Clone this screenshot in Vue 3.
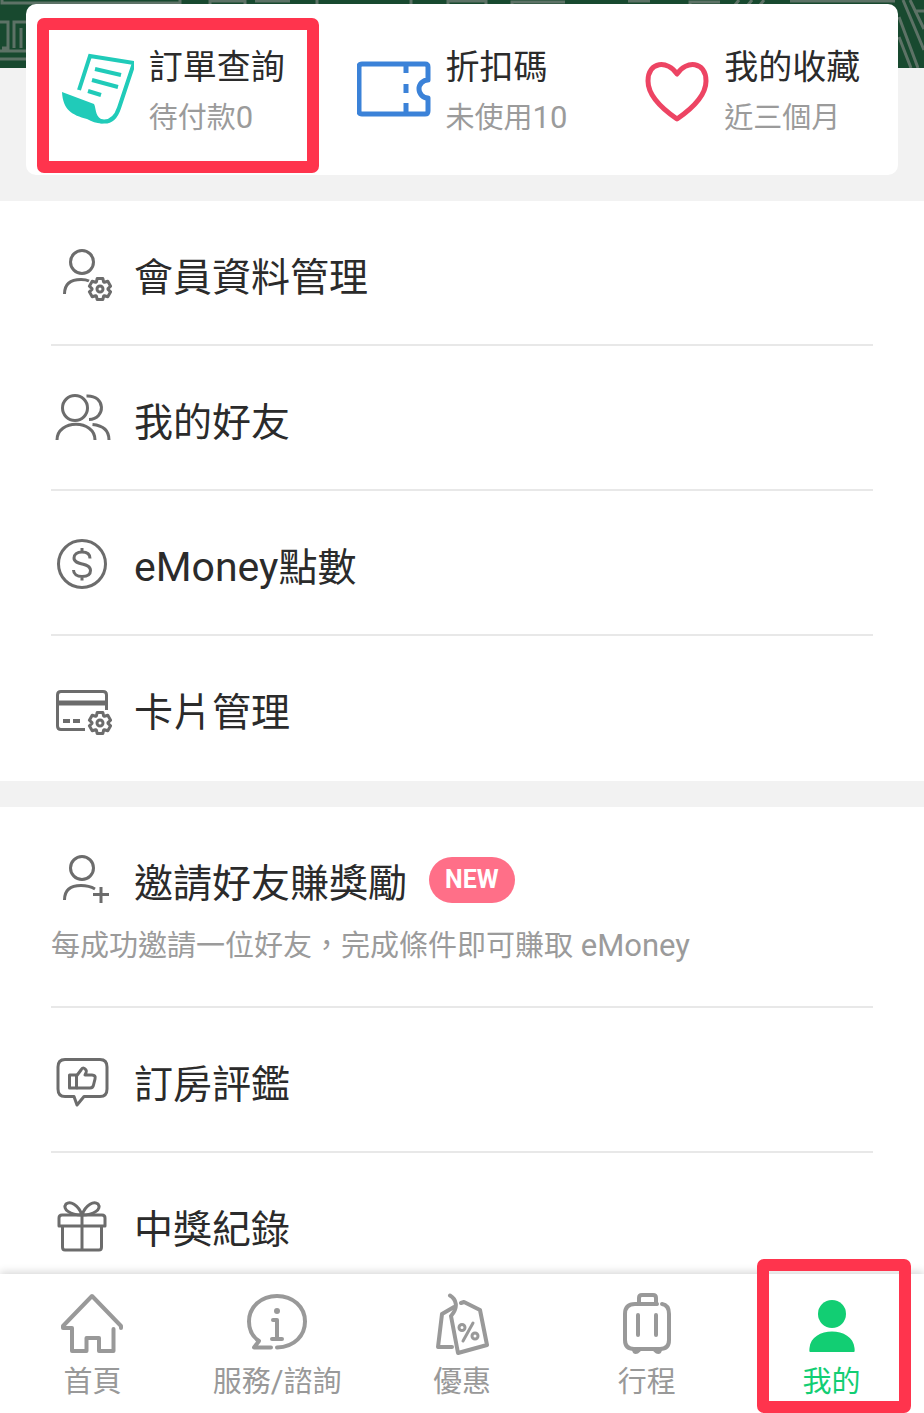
<template>
    <div class="page">
        <main class="content">
            <header class="top">
                <svg class="art" viewBox="0 0 924 68" preserveAspectRatio="none" aria-hidden="true">
                    <rect width="924" height="68" fill="#18492f" />
                    <g fill="none" stroke="#5d7266" stroke-width="3">
                        <path d="M2 0V3H180V0M210 5V1H245V5M255 1H290M317 0V5M411 5V0M448 5V1H486V5M512 5V2H565M628 1H650M690 5V2H720M735 5L739 0M748 5L752 0M760 5L764 0M790 1H895" />
                        <path d="M0 22H8V48H2M14 48V22H26M21 48V28M0 51H26M0 59H26" />
                        <path d="M899 17L918 68M899 37L911 68M903 0L924 50M910 0L924 29M914 11H924" />
                    </g>
                </svg>
                <nav class="card">
                    <a v-for="item in shortcuts" :key="item.title" class="shortcut" :class="{ marked: item.marked }" href="#">
                        <svg v-if="item.icon === 'order'" class="shortcut-icon" viewBox="-2 0 74 74" aria-hidden="true">
                            <path d="M17 38L28 4L72 11L57 56C53 68 46 71 38 69" fill="none" stroke="#20cbb9" stroke-width="4" />
                            <path d="M0 40L32 52C34 55 33 64 39 67L45 70C40 73 32 71 25 67C10 63 1 58 0 40Z" fill="#20cbb9" />
                            <path d="M33 17L59 23M30 28L56 35M26 39L39 43" fill="none" stroke="#20cbb9" stroke-width="4" />
                        </svg>
                        <svg v-else-if="item.icon === 'coupon'" class="shortcut-icon" viewBox="0 0 74 74" aria-hidden="true">
                            <g fill="none" stroke="#3b82d8" stroke-width="5">
                                <path d="M5 12H68Q71 12 71 15V28A9 9 0 0 0 71 46V59Q71 62 68 62H5Q2 62 2 59V15Q2 12 5 12Z" stroke-linejoin="round" />
                                <path d="M49 12V21M49 32V41M49 51V62" />
                            </g>
                        </svg>
                        <svg v-else class="shortcut-icon heart" viewBox="0 0 64 74" aria-hidden="true">
                            <path d="M32 22C23 8 3 9 3 29C3 43 16 56 32 67C48 56 61 43 61 29C61 9 41 8 32 22Z" fill="none" stroke="#ed4463" stroke-width="5" stroke-linejoin="round" />
                        </svg>
                        <span class="shortcut-text">
                            <span class="shortcut-title">{{ item.title }}</span>
                            <span class="shortcut-sub"><span v-for="(part, p) in split(item.sub)" :key="p" :class="{ latin: p % 2 }">{{ part }}</span></span>
                        </span>
                    </a>
                </nav>
            </header>

            <ul v-for="(group, i) in groups" :key="i" class="group">
                <li v-for="row in group" :key="row.title">
                    <a class="row" href="#">
                        <span class="row-head">
                            <svg class="row-icon" viewBox="0 0 60 60" aria-hidden="true">
                                <path v-for="d in icons[row.icon]" :key="d" :d="d" />
                                <path v-if="row.icon === 'card'" class="bar" d="M5 24H55" />
                                <path v-if="row.icon === 'card'" class="dash" d="M11 42H18M21 42H28" />
                            </svg>
                            <span class="row-title"><span v-for="(part, p) in split(row.title)" :key="p" :class="{ latin: p % 2 }">{{ part }}</span></span>
                            <span v-if="row.badge" class="badge">{{ row.badge }}</span>
                        </span>
                        <span v-if="row.note" class="note"><span v-for="(part, p) in split(row.note)" :key="p" :class="{ latin: p % 2 }">{{ part }}</span></span>
                    </a>
                </li>
            </ul>
        </main>

        <nav class="tabbar">
            <a v-for="tab in tabs" :key="tab.label" class="tab" :class="{ active: tab.active }" href="#">
                <svg class="tab-icon" viewBox="0 0 64 64" aria-hidden="true">
                    <path v-for="(d, n) in icons[tab.icon]" :key="d" :d="d" :class="{ thin: tab.icon === 'offer' && n > 1 }" />
                    <circle v-if="tab.icon === 'info'" class="dot" cx="32" cy="18" r="3" />
                </svg>
                <span class="tab-label"><span v-for="(part, p) in split(tab.label)" :key="p" :class="{ latin: p % 2 }">{{ part }}</span></span>
            </a>
        </nav>
    </div>
</template>

<script setup>
// odd parts are latin letters or digits, even parts are Chinese
function split(text) {
    return text.split(/([A-Za-z0-9/ ]+)/)
}

// six-toothed cog, without the hole
function gear(cx, cy) {
    const points = []
    const steps = [[-27, 8], [-15, 11], [15, 11], [27, 8]]
    for (let i = 0; i < 6; i++) {
        for (const [offset, r] of steps) {
            const a = ((i * 60 - 90 + offset) * Math.PI) / 180
            points.push(`${(cx + r * Math.cos(a)).toFixed(1)} ${(cy + r * Math.sin(a)).toFixed(1)}`)
        }
    }
    return `M${points.join('L')}Z`
}

function circle(cx, cy, r) {
    return `M${cx - r} ${cy}a${r} ${r} 0 1 0 ${r * 2} 0a${r} ${r} 0 1 0 ${-r * 2} 0Z`
}

const icons = {
    profile: [circle(30, 18, 11.5), 'M12.5 50C12.5 40 19 35.5 29 35.5Q34 35.5 37 37', gear(48, 45), circle(48, 45, 3)],
    friends: [circle(23, 19, 12.5), 'M34.5 7C54 6 54 30 37 30.5', 'M5 51C5 30 43 30 43 51', 'M40.5 35.5Q57 37 57 51'],
    money: [circle(30, 30, 23.5), 'M38 24.5C38 20 34.5 18 30 18C25 18 22 20.5 22 24C22 28 26 29 30 30C34 31 38.5 32 38.5 36.5C38.5 40.5 35 42.5 30 42.5C25 42.5 21.5 40 21.5 36M30 14V18M30 42.5V46.5'],
    card: ['M33 50.5H9Q5.5 50.5 5.5 47V16Q5.5 12.5 9 12.5H51Q54.5 12.5 54.5 16V31', gear(48, 44), circle(48, 44, 3)],
    invite: [circle(30, 18, 11.5), 'M12.5 50C12.5 40 19 35.5 29 35.5Q37 35.5 43 39', 'M41 44.5H57M49 37V53'],
    review: ['M13 8.5H48Q55 8.5 55 16V38Q55 45.5 48 45.5H32L25 54L22 45.5H13Q6 45.5 6 38V16Q6 8.5 13 8.5Z', 'M17.5 24H24.5V37H17.5Z', 'M24.5 25L29 19Q31 15 34 19Q35 20 33 24H40Q44 24 43 28L41.5 34Q41 37 38 37H24.5'],
    gift: ['M10 19H50Q53 19 53 22V30H7V22Q7 19 10 19Z', 'M10.5 30V51Q10.5 54 13 54H47Q49.5 54 49.5 51V30', 'M30 19V54', 'M30 19C26 8 18 5 14 8C10 13 18 19 30 19C42 19 50 13 46 8C42 5 34 8 30 19Z'],
    home: ['M53.5 36V58H39V45H26.5V58H12V35H3V33L32 3L61 33V35'],
    info: ['M32 54.5C50 54 60 42 60 28.5C60 14 48 3 32 3C16 3 4 14 4 28.5C4 37 8 44 14 48L9 54.5H26', 'M28 27H32V46M27 46H37'],
    offer: ['M20 2.5C26 6 29 14 21 23L28 60L57 52L50 17L34 9L31 10', 'M24 14L12 21L8 54H22', circle(32, 34.5, 3), circle(45, 43, 3), 'M43 30L33 48'],
    trip: ['M42 11H20Q10 11 10 21V47Q10 56 19 56H45Q54 56 54 47V21Q54 12 47 11', 'M24 11V5Q24 2 27 2H38Q41 2 41 5V11', 'M23 22V42M41 22V42', 'M19 57Q20 61 24 57M40 57Q44 61 45 57'],
    me: [circle(32, 21, 14), 'M10 59Q9 59 9.5 55C11 33 53 33 54.5 55Q55 59 54 59Z']
}

const shortcuts = [
    { icon: 'order', title: '訂單查詢', sub: '待付款0', marked: true },
    { icon: 'coupon', title: '折扣碼', sub: '未使用10' },
    { icon: 'heart', title: '我的收藏', sub: '近三個月' }
]

const groups = [
    [
        { icon: 'profile', title: '會員資料管理' },
        { icon: 'friends', title: '我的好友' },
        { icon: 'money', title: 'eMoney點數' },
        { icon: 'card', title: '卡片管理' }
    ],
    [
        { icon: 'invite', title: '邀請好友賺獎勵', badge: 'NEW', note: '每成功邀請一位好友，完成條件即可賺取 eMoney' },
        { icon: 'review', title: '訂房評鑑' },
        { icon: 'gift', title: '中獎紀錄' }
    ]
]

const tabs = [
    { icon: 'home', label: '首頁' },
    { icon: 'info', label: '服務/諮詢' },
    { icon: 'offer', label: '優惠' },
    { icon: 'trip', label: '行程' },
    { icon: 'me', label: '我的', active: true }
]
</script>

<style>
body {
    margin: 0;
}
</style>

<style scoped>
.page {
    display: flex;
    flex-direction: column;
    height: 100vh;
    background: #f2f2f2;
    color: #2b2b2b;
    font-family: "Noto Sans CJK TC", sans-serif;
}
.page * {
    box-sizing: border-box;
}
a {
    color: inherit;
    text-decoration: none;
}
.latin {
    font-family: Roboto, sans-serif;
    font-size: 31px;
    line-height: 1;
}
.content {
    flex: 1;
    min-height: 0;
    overflow-y: auto;
    scrollbar-width: none;
}
.top {
    position: relative;
    padding: 4px 26px 26px;
}
.art {
    position: absolute;
    top: 0;
    left: 0;
    width: 100%;
    height: 68px;
}
.card {
    position: relative;
    display: grid;
    grid-template-columns: repeat(3, 1fr);
    background: #fff;
    border-radius: 10px;
}
.shortcut {
    position: relative;
    display: flex;
    align-items: center;
    justify-content: center;
    gap: 15px;
    padding: 34px 0 35px;
}
.shortcut-icon {
    width: 74px;
    height: 74px;
}
.shortcut-icon.heart {
    width: 64px;
}
.shortcut-text {
    display: flex;
    flex-direction: column;
    padding-top: 2px;
    line-height: 50px;
    white-space: nowrap;
}
.shortcut-title {
    font-size: 34px;
}
.shortcut-sub {
    color: #9b9b9b;
    font-size: 29px;
}
.marked {
    padding-left: 2px;
}
.marked::after,
.tab.active::after {
    content: "";
    position: absolute;
    border: 12px solid #ff344d;
    border-radius: 7px;
}
.marked::after {
    inset: 14px -2px 2px 11px;
}
.group {
    margin: 0;
    padding: 0 51px;
    list-style: none;
    background: #fff;
}
.group + .group {
    margin-top: 26px;
}
.row {
    display: block;
    padding: 43px 0 40px;
    border-bottom: 2px solid #e8e8e8;
}
li:last-child .row {
    border-bottom-color: transparent;
}
.row-head {
    display: flex;
    align-items: center;
    height: 60px;
}
.row-icon {
    width: 60px;
    height: 60px;
    margin: 0 22px 0 1px;
    fill: none;
    stroke: #6c6c6c;
    stroke-width: 3;
    stroke-linejoin: round;
}
.row-icon .bar {
    stroke-width: 5;
}
.row-icon .dash {
    stroke-width: 4;
}
.row-title {
    font-size: 39px;
    line-height: 60px;
}
.row-title .latin {
    font-size: 41px;
}
.badge {
    margin-left: 22px;
    padding: 0 16px;
    border-radius: 23px;
    background: #ff6f88;
    color: #fff;
    font-family: Roboto, sans-serif;
    font-size: 25px;
    font-weight: 700;
    line-height: 46px;
}
.note {
    display: block;
    padding: 13px 0 3px;
    color: #9b9b9b;
    font-size: 29px;
    line-height: 40px;
}
.tabbar {
    position: relative;
    display: grid;
    grid-template-columns: repeat(5, 1fr);
    background: #fff;
    box-shadow: 0 -2px 8px rgba(0, 0, 0, 0.16);
}
.tab {
    position: relative;
    display: flex;
    flex-direction: column;
    align-items: center;
    padding: 19px 0 12px;
    color: #999;
}
.tab-icon {
    width: 64px;
    height: 64px;
    fill: none;
    stroke: currentColor;
    stroke-width: 4;
    stroke-linecap: round;
    stroke-linejoin: round;
}
.tab-icon .thin {
    stroke-width: 3;
}
.tab-icon .dot {
    fill: currentColor;
    stroke: none;
}
.tab-label {
    font-size: 29px;
    line-height: 44px;
}
.tab.active {
    color: #12ce73;
}
.tab.active .tab-icon {
    fill: currentColor;
    stroke: none;
}
.tab.active::after {
    inset: -15px 13px 0 18px;
}
</style>
